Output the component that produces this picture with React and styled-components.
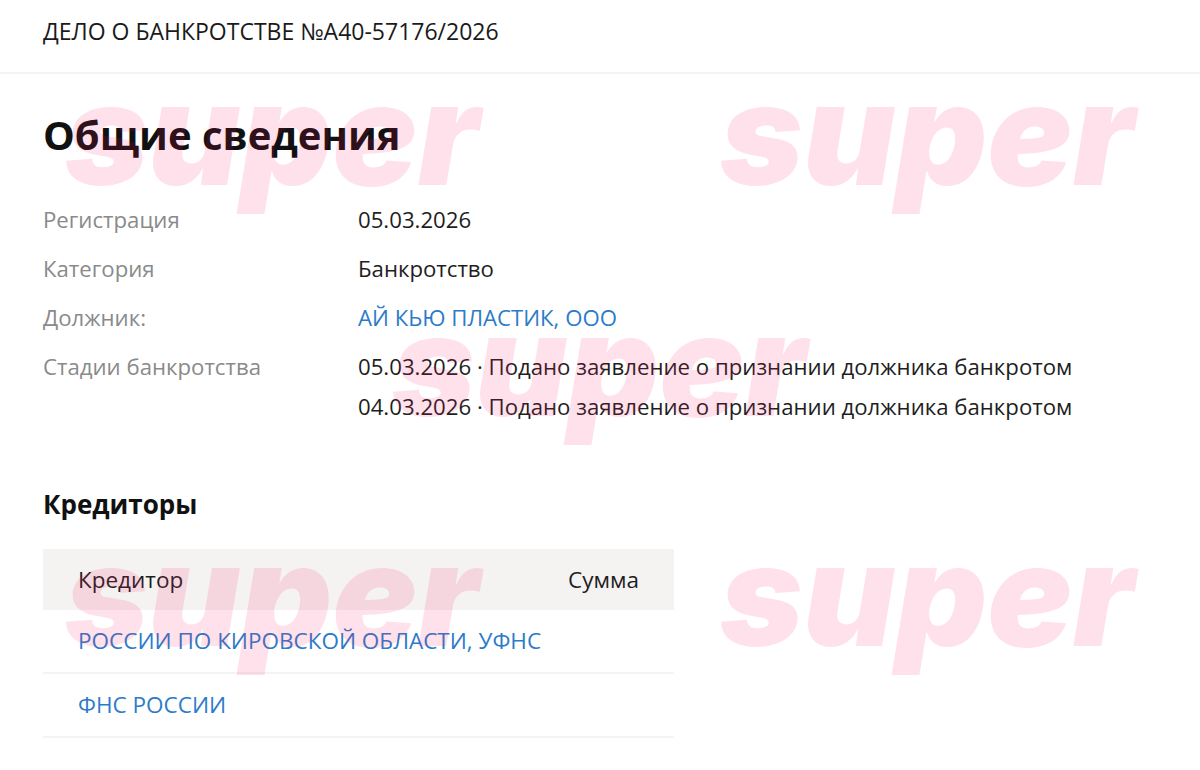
import React from "react";
import styled, { createGlobalStyle } from "styled-components";

const GlobalStyle = createGlobalStyle`
  html, body {
    margin: 0;
    padding: 0;
    background: #fff;
  }
  body {
    font-family: "Open Sans", "Noto Sans", Arial, sans-serif;
    color: #1c1c1c;
    -webkit-font-smoothing: antialiased;
  }
`;

const stages = [
  "05.03.2026 · Подано заявление о признании должника банкротом",
  "04.03.2026 · Подано заявление о признании должника банкротом",
];

const creditors = ["РОССИИ ПО КИРОВСКОЙ ОБЛАСТИ, УФНС", "ФНС РОССИИ"];

// watermark stamps laid over the page
const marks = [
  { left: 65, top: 62 },
  { left: 720, top: 62 },
  { left: 392, top: 293 },
  { left: 65, top: 523 },
  { left: 720, top: 523 },
];

function App() {
  return (
    <Page>
      <GlobalStyle />
      <Header>ДЕЛО О БАНКРОТСТВЕ №А40-57176/2026</Header>
      <Main>
        <Title>Общие сведения</Title>
        <InfoGrid>
          <Label>Регистрация</Label>
          <Value>05.03.2026</Value>
          <Label>Категория</Label>
          <Value>Банкротство</Value>
          <Label>Должник:</Label>
          <Value>
            <Link href="#">АЙ КЬЮ ПЛАСТИК, ООО</Link>
          </Value>
          <Label>Стадии банкротства</Label>
          <StageList>
            {stages.map((s) => (
              <Value key={s}>{s}</Value>
            ))}
          </StageList>
        </InfoGrid>

        <SubTitle>Кредиторы</SubTitle>
        <Table>
          <HeadRow>
            <span>Кредитор</span>
            <span>Сумма</span>
          </HeadRow>
          {creditors.map((c) => (
            <Row key={c}>
              <Link href="#">{c}</Link>
            </Row>
          ))}
        </Table>
      </Main>

      {marks.map((m, i) => (
        <Watermark key={i} style={{ left: m.left, top: m.top }}>
          super
        </Watermark>
      ))}
    </Page>
  );
}

export default App;

const Page = styled.div`
  position: relative;
  width: 1200px;
  height: 770px;
  overflow: hidden;
`;

const Header = styled.header`
  height: 74px;
  box-sizing: border-box;
  display: flex;
  align-items: center;
  padding: 0 43px 10px;
  border-bottom: 2px solid #f4f4f4;
  font-size: 23px;
  color: #1a1a1a;
`;

const Main = styled.main`
  padding: 0 43px;
`;

const Title = styled.h1`
  margin: 36px 0 45px;
  font-size: 40px;
  line-height: 50px;
  font-weight: 700;
  color: #111;
`;

const InfoGrid = styled.div`
  display: grid;
  grid-template-columns: 315px 1fr;
  row-gap: 19px;
  font-size: 22.2px;
  line-height: 30px;
`;

const Label = styled.div`
  color: #8a8a8a;
`;

const Value = styled.div`
  color: #1e1e1e;
`;

const StageList = styled.div`
  display: flex;
  flex-direction: column;
  gap: 10px;
`;

const Link = styled.a`
  color: #2c7bc9;
  text-decoration: none;
`;

const SubTitle = styled.h2`
  margin: 66px 0 29px;
  font-size: 26px;
  line-height: 32px;
  font-weight: 700;
  color: #111;
`;

const Table = styled.div`
  width: 631px;
  font-size: 22.5px;
  line-height: 30px;
`;

const HeadRow = styled.div`
  height: 61px;
  display: flex;
  align-items: center;
  justify-content: space-between;
  padding: 0 35px;
  background: #f5f3f2;
  color: #1e1e1e;
`;

const Row = styled.div`
  height: 64px;
  display: flex;
  align-items: center;
  padding: 0 35px;
  border-bottom: 2px solid #f4f4f4;
  box-sizing: border-box;
`;

const Watermark = styled.div`
  position: absolute;
  pointer-events: none;
  font-family: Inter, "Open Sans", sans-serif;
  font-size: 142px;
  line-height: 1;
  font-weight: 900;
  font-style: oblique 10deg;
  letter-spacing: 0;
  color: rgba(245, 20, 100, 0.13);
  white-space: nowrap;
`;
